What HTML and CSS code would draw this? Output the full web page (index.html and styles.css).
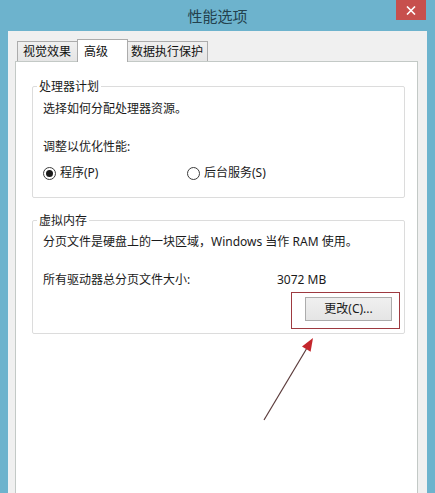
FILE: index.html
```html
<!DOCTYPE html>
<html lang="zh-CN">
<head>
<meta charset="utf-8">
<title>性能选项</title>
<link rel="stylesheet" href="styles.css">
</head>
<body>
<div class="window">
  <div class="titlebar">
    <span class="title">性能选项</span>
    <div class="close">
      <svg width="10" height="9" viewBox="0 0 10 9"><path d="M1 0.5 L9 8.5 M9 0.5 L1 8.5" stroke="#fff" stroke-width="1.6" fill="none"/></svg>
    </div>
  </div>
  <div class="client">
    <div class="tabs">
      <div class="tab t1">视觉效果</div>
      <div class="tab active">高级</div>
      <div class="tab t3">数据执行保护</div>
    </div>
    <div class="panel">
      <fieldset class="group g1">
        <legend>处理器计划</legend>
        <p class="line">选择如何分配处理器资源。</p>
        <p class="line gap">调整以优化性能:</p>
        <div class="radios">
          <label class="radio r1"><span class="dot on"></span><span>程序(P)</span></label>
          <label class="radio"><span class="dot"></span><span>后台服务(S)</span></label>
        </div>
      </fieldset>
      <fieldset class="group g2">
        <legend>虚拟内存</legend>
        <p class="line">分页文件是硬盘上的一块区域，Windows 当作 RAM 使用。</p>
        <div class="line gap size"><span class="lbl">所有驱动器总分页文件大小:</span><span>3072 MB</span></div>
        <div class="btnrow">
          <div class="highlight"><div class="btn">更改(C)...</div></div>
        </div>
      </fieldset>
      <svg class="arrow" width="70" height="100" viewBox="0 0 70 100">
        <line x1="8" y1="88" x2="51" y2="16" stroke="#5b3b3b" stroke-width="1.2"/>
        <polygon points="57,6 54.6,19.7 46,14.6" fill="#c4262c"/>
      </svg>
    </div>
  </div>
</div>
</body>
</html>
```
FILE: styles.css
```css
* { box-sizing: border-box; }
html, body { margin: 0; padding: 0; }
body {
  width: 435px;
  height: 493px;
  overflow: hidden;
  font-family: "Noto Sans", "Noto Sans CJK SC", sans-serif;
  font-size: 12px;
  line-height: 16px;
  color: #1a1a1a;
}
.window {
  width: 435px;
  height: 493px;
  background: #6db3cd;
  display: flex;
  flex-direction: column;
}
.titlebar {
  height: 31px;
  flex: none;
  display: grid;
  grid-template-columns: 1fr auto 1fr;
}
.title {
  grid-column: 2;
  align-self: center;
  font-family: "Noto Sans CJK SC", sans-serif;
  font-size: 15px;
  line-height: 20px;
  color: #23414d;
  padding-top: 1px;
}
.close {
  grid-column: 3;
  justify-self: end;
  align-self: start;
  width: 30px;
  height: 20px;
  margin-right: 9px;
  background: #c7504d;
  display: flex;
  align-items: center;
  justify-content: center;
}
.close svg { display: block; }
.client {
  flex: 1;
  margin: 0 8px 0 8px;
  background: #f0f0f0;
  border-left: 1px solid #eef1f5;
  padding: 8px 9px 0 6px;
  display: flex;
  flex-direction: column;
}
.tabs {
  display: flex;
  align-items: flex-end;
  padding-left: 2px;
  height: 22px;
  flex: none;
}
.tab {
  height: 20px;
  border: 1px solid #acacac;
  border-bottom: none;
  background: linear-gradient(#f0f0f0, #e5e5e5);
  font-family: "Noto Sans CJK SC", sans-serif;
  line-height: 18px;
  color: #111;
}
.t1 { width: 60px; padding-left: 5px; border-right: none; }
.active {
  width: 51px;
  height: 23px;
  padding-left: 6px;
  background: #fff;
  margin-bottom: -1px;
  position: relative;
  z-index: 1;
  line-height: 21px;
}
.t3 { width: 80px; padding-left: 3px; border-left: none; }
.panel {
  flex: 1;
  background: #fff;
  border: 1px solid #c3c9c6;
  border-bottom: none;
  position: relative;
  padding-top: 16px;
}
.group {
  margin: 0 12px 0 16px;
  border: 1px solid #dcdcdc;
  border-radius: 2px;
  padding: 7px 0 16px 10px;
  min-width: 0;
}
.group legend {
  margin-left: -6px;
  padding: 0 2px;
  font-family: "Noto Sans CJK SC", sans-serif;
  line-height: 16px;
}
.g2 { margin-top: 14px; padding-top: 6px; padding-bottom: 4px; }
.line { margin: 0; height: 16px; white-space: nowrap; }
.gap { margin-top: 22px; }
.radios { display: flex; margin-top: 10px; height: 16px; align-items: center; }
.radio { display: flex; align-items: center; gap: 4px; }
.r1 { width: 144px; }
.dot {
  width: 13px;
  height: 13px;
  border: 1px solid #3c3c3c;
  border-radius: 50%;
  background: #fff;
  display: flex;
  align-items: center;
  justify-content: center;
}
.dot.on::after {
  content: "";
  width: 7px;
  height: 7px;
  border-radius: 50%;
  background: #1a1a1a;
}
.size { display: flex; }
.lbl { width: 234px; }
.btnrow { display: flex; justify-content: flex-end; margin-top: 4px; margin-right: 4px; }
.highlight {
  border: 1px solid #9e3a40;
  padding: 4px 7px 7px 13px;
}
.btn {
  width: 87px;
  height: 24px;
  border: 1px solid #acacac;
  background: linear-gradient(#f0f0f0, #e5e5e5);
  display: flex;
  align-items: center;
  justify-content: center;
  line-height: 16px;
}
.arrow {
  position: absolute;
  left: 240px;
  top: 270px;
}
```
